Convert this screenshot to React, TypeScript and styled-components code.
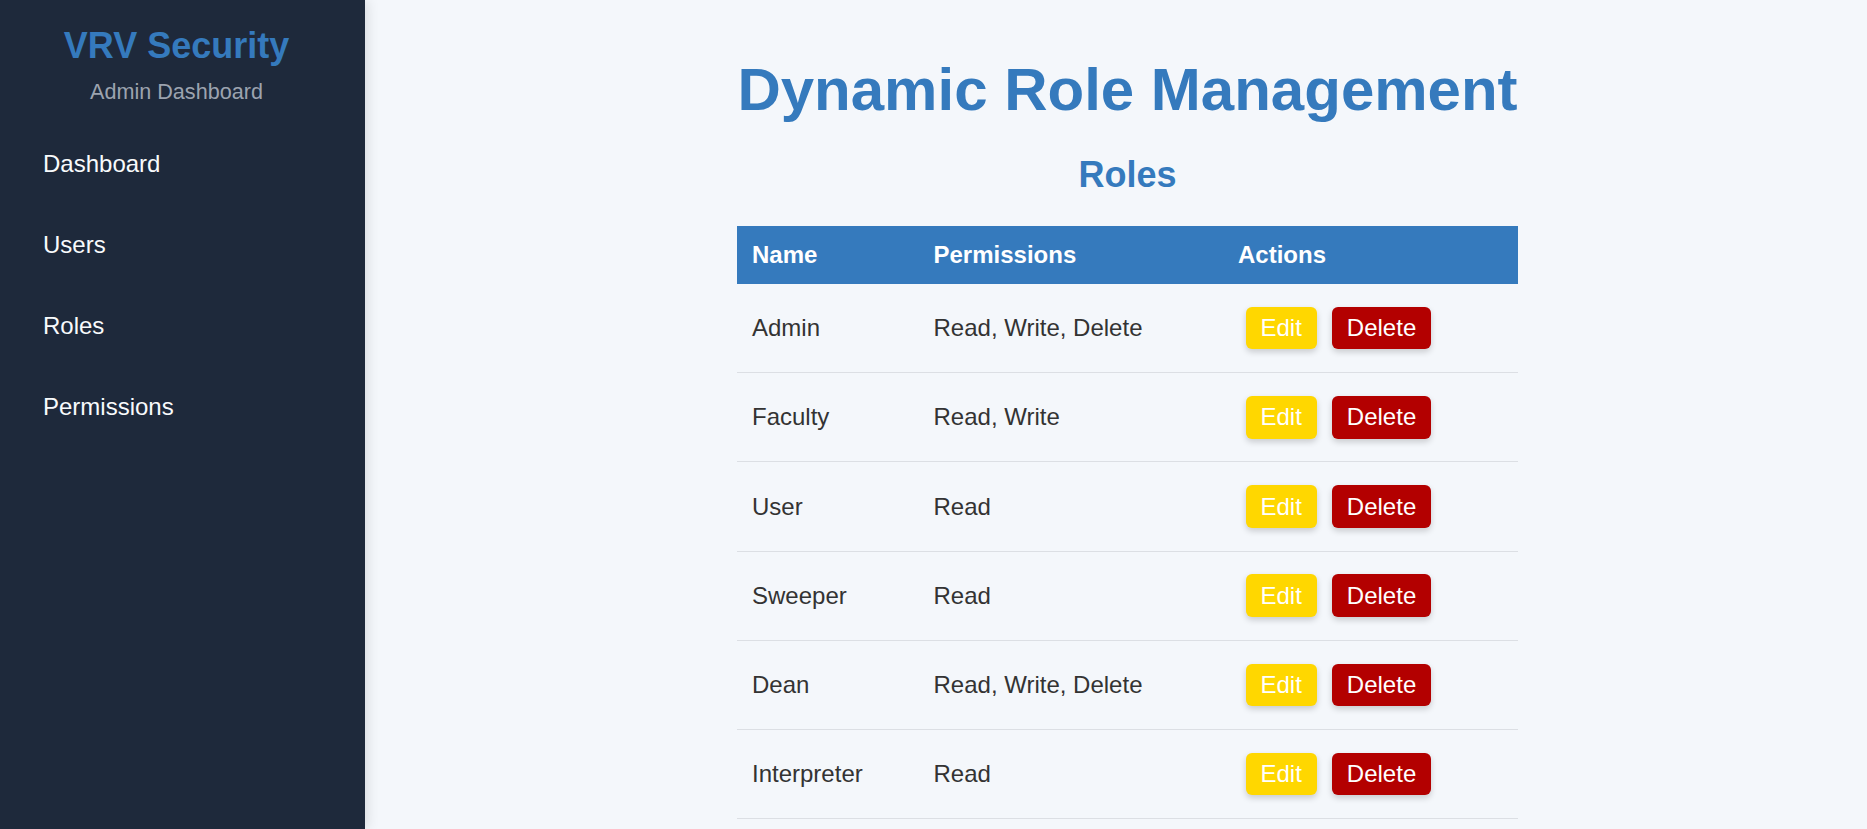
import React from "react";
import styled, { createGlobalStyle } from "styled-components";

const GlobalStyle = createGlobalStyle`
  html, body {
    margin: 0;
    padding: 0;
    height: 100%;
    overflow: hidden;
  }
  body {
    font-family: "Liberation Sans", Arial, sans-serif;
    background: #f4f7fb;
    color: #333;
  }
  * { box-sizing: border-box; }
`;

const Layout = styled.div`
  display: flex;
  height: 100vh;
  overflow: hidden;
`;

const Sidebar = styled.aside`
  flex: 0 0 365px;
  width: 365px;
  background: #1e293b;
  padding-top: 25px;
  box-shadow: 2px 0 12px rgba(0, 0, 0, 0.12);
  position: relative;
  z-index: 1;
`;

const Brand = styled.div`
  text-align: center;
  padding-right: 12px;
`;

const BrandTitle = styled.h2`
  margin: 0;
  font-size: 36px;
  line-height: 1.15;
  font-weight: 700;
  color: #357abd;
`;

const BrandSub = styled.p`
  margin: 14px 0 0;
  font-size: 21.6px;
  line-height: 1.15;
  color: #9ca3af;
`;

const Nav = styled.nav`
  display: flex;
  flex-direction: column;
  margin-top: 18.5px;
`;

const NavItem = styled.a`
  display: block;
  padding: 26.6px 43px;
  font-size: 24px;
  line-height: 1.15;
  color: #f8fafc;
  text-decoration: none;
`;

const Main = styled.main`
  flex: 1;
  padding: 55px 15px 0 38px;
  background: #f4f7fb;
`;

const Content = styled.div`
  width: 781px;
  margin: 0 auto;
`;

const Title = styled.h1`
  margin: 0 0 30px;
  text-align: center;
  font-size: 60px;
  line-height: 1.15;
  font-weight: 700;
  color: #357abd;
`;

const Subtitle = styled.h2`
  margin: 0 0 31px;
  text-align: center;
  font-size: 36px;
  line-height: 1.15;
  font-weight: 700;
  color: #357abd;
`;

const Table = styled.table`
  width: 781px;
  border-collapse: collapse;
  table-layout: fixed;
`;

const HeadCell = styled.th<{ $w: number }>`
  width: ${(p) => p.$w}px;
  background: #357abd;
  color: #fff;
  text-align: left;
  font-size: 24px;
  line-height: 1.15;
  font-weight: 700;
  padding: 15px;
`;

const Row = styled.tr`
  border-bottom: 1px solid #dcdfe4;
`;

const Cell = styled.td`
  padding: 15.3px 15px;
  font-size: 24px;
  line-height: 1.15;
  color: #333;
  vertical-align: middle;
`;

const Actions = styled.div`
  display: flex;
  align-items: center;
`;

const Button = styled.button<{ $kind: "edit" | "delete" }>`
  margin: 7.5px;
  padding: 7.5px 15px;
  border: none;
  border-radius: 6px;
  font-family: "Liberation Sans", Arial, sans-serif;
  font-size: 24px;
  line-height: 1.15;
  color: #fff;
  background: ${(p) => (p.$kind === "edit" ? "#ffd700" : "#b30000")};
  box-shadow: 0 3px 6px rgba(0, 0, 0, 0.18);
  cursor: pointer;
`;

const roles = [
  { name: "Admin", perms: "Read, Write, Delete" },
  { name: "Faculty", perms: "Read, Write" },
  { name: "User", perms: "Read" },
  { name: "Sweeper", perms: "Read" },
  { name: "Dean", perms: "Read, Write, Delete" },
  { name: "Interpreter", perms: "Read" },
];

export default function App() {
  return (
    <>
      <GlobalStyle />
      <Layout>
        <Sidebar>
          <Brand>
            <BrandTitle>VRV Security</BrandTitle>
            <BrandSub>Admin Dashboard</BrandSub>
          </Brand>
          <Nav>
            <NavItem href="#">Dashboard</NavItem>
            <NavItem href="#">Users</NavItem>
            <NavItem href="#">Roles</NavItem>
            <NavItem href="#">Permissions</NavItem>
          </Nav>
        </Sidebar>
        <Main>
          <Content>
            <Title>Dynamic Role Management</Title>
            <Subtitle>Roles</Subtitle>
            <Table>
              <thead>
                <tr>
                  <HeadCell $w={181.5}>Name</HeadCell>
                  <HeadCell $w={304.5}>Permissions</HeadCell>
                  <HeadCell $w={295}>Actions</HeadCell>
                </tr>
              </thead>
              <tbody>
                {roles.map((r) => (
                  <Row key={r.name}>
                    <Cell>{r.name}</Cell>
                    <Cell>{r.perms}</Cell>
                    <Cell>
                      <Actions>
                        <Button $kind="edit">Edit</Button>
                        <Button $kind="delete">Delete</Button>
                      </Actions>
                    </Cell>
                  </Row>
                ))}
              </tbody>
            </Table>
          </Content>
        </Main>
      </Layout>
    </>
  );
}
